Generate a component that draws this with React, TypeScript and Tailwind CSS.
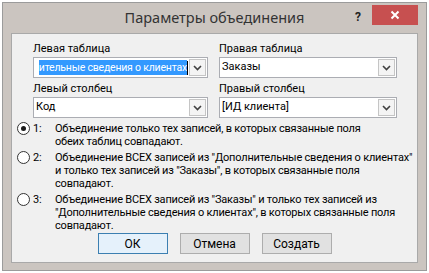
import { ReactNode } from "react";

const Chevron = () => (
  <svg width="9" height="6" viewBox="0 0 9 6" fill="none">
    <path d="M1 1l3.5 3.5L8 1" stroke="#404040" strokeWidth="1.6" />
  </svg>
);

const Combo = ({ children, end }: { children: ReactNode; end?: boolean }) => (
  <div className="flex h-[21px] items-stretch border border-[#abadb3] bg-white">
    <div
      className={
        end
          ? "flex flex-1 items-center justify-end overflow-hidden whitespace-nowrap pl-[2px]"
          : "flex flex-1 items-center overflow-hidden whitespace-nowrap pl-[2px]"
      }
    >
      {children}
    </div>
    <div className="my-[1px] mr-[1px] flex w-[17px] shrink-0 items-center justify-center border border-[#c5c5c5] bg-[#f4f4f4]">
      <Chevron />
    </div>
  </div>
);

const Radio = ({ checked, num, lines }: { checked?: boolean; num: string; lines: string[] }) => (
  <div className="flex items-start">
    <div className="flex h-[13px] w-[13px] shrink-0 items-center justify-center rounded-full border border-[#333] bg-white">
      {checked && <div className="h-[5px] w-[5px] rounded-full bg-[#1a1a1a]" />}
    </div>
    <div className="w-[25px] shrink-0 pl-[3px]">{num}</div>
    <div>
      {lines.map((l) => (
        <div key={l} className="whitespace-nowrap">{l}</div>
      ))}
    </div>
  </div>
);

export default function App() {
  return (
    <div className="h-[273px] w-[429px] bg-white p-[2px] font-['Roboto',sans-serif] text-[11px] text-black">
      <div className="flex h-full flex-col border border-[#9b9b9b] bg-[#cbc5c0] px-[8px] pb-[7px]">
        {/* title bar */}
        <div className="relative flex h-[30px] items-center justify-center">
          <span className="font-['Noto_Sans',sans-serif] text-[14.5px] text-[#333]">Параметры объединения</span>
          <span className="absolute right-[57px] top-[5px] text-[12px] font-bold text-[#222]">?</span>
          <div className="absolute right-0 top-[2px] flex h-[20px] w-[46px] items-center justify-center bg-[#c75050]">
            <svg width="10" height="10" viewBox="0 0 10 10">
              <path d="M1.5 1.5l7 7M8.5 1.5l-7 7" stroke="#fff" strokeWidth="2" />
            </svg>
          </div>
        </div>

        {/* content */}
        <div className="flex flex-1 flex-col border border-[#a9a9a9] bg-[#f0f0f0] pb-[8px] pt-[7px]">
          <div className="grid grid-cols-[175px_178px] gap-x-[11px] pl-[21px]">
            <div>
              <div className="h-[16px] leading-[16px]">Левая таблица</div>
              <Combo end>
                <span className="shrink-0 bg-[#3399ff] text-[10.5px] tracking-[-0.2px] text-white">ительные сведения о клиентах</span>
                <span className="mr-[1px] h-[14px] w-[1px] shrink-0 bg-black" />
              </Combo>
              <div className="mt-[3px] h-[16px] leading-[16px]">Левый столбец</div>
              <Combo>Код</Combo>
            </div>
            <div>
              <div className="h-[16px] leading-[16px]">Правая таблица</div>
              <Combo>Заказы</Combo>
              <div className="mt-[3px] h-[16px] leading-[16px]">Правый столбец</div>
              <Combo>[ИД клиента]</Combo>
            </div>
          </div>

          <div className="mt-[4px] flex flex-col gap-[3px] pl-[5px] leading-[13px] tracking-[-0.2px]">
            <Radio
              checked
              num="1:"
              lines={["Объединение только тех записей, в которых связанные поля", "обеих таблиц совпадают."]}
            />
            <Radio
              num="2:"
              lines={[
                "Объединение ВСЕХ записей из \"Дополнительные сведения о клиентах\"",
                "и только тех записей из \"Заказы\", в которых связанные поля",
                "совпадают.",
              ]}
            />
            <Radio
              num="3:"
              lines={[
                "Объединение ВСЕХ записей из \"Заказы\" и только тех записей из",
                "\"Дополнительные сведения о клиентах\", в которых связанные поля",
                "совпадают.",
              ]}
            />
          </div>

          <div className="mt-[1px] flex justify-center gap-[12px]">
            <button className="h-[21px] w-[70px] border border-[#3c7fb1] bg-[#e5f1fb] text-[12px]">ОК</button>
            <button className="h-[21px] w-[70px] border border-[#adadad] bg-[#e1e1e1] text-[12px]">Отмена</button>
            <button className="h-[21px] w-[70px] border border-[#adadad] bg-[#e1e1e1] text-[12px]">Создать</button>
          </div>
        </div>
      </div>
    </div>
  );
}
